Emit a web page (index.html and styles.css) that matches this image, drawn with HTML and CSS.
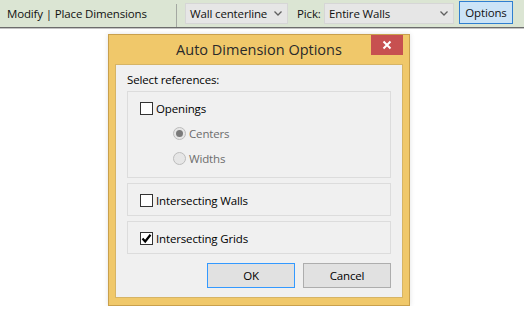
FILE: index.html
```html
<!DOCTYPE html>
<html lang="en">
<head>
  <meta charset="UTF-8" />
  <title>Auto Dimension Options</title>
  <link rel="stylesheet" href="styles.css">
</head>
<body>
  <div class="ribbon">
    <span class="ribbon-title">Modify | Place Dimensions</span>
    <span class="sep"></span>
    <div class="combo combo-loc">
      <span>Wall centerline</span>
      <svg class="chev" width="8" height="5" viewBox="0 0 8 5"><path d="M0.5 0.5 L4 4 L7.5 0.5" fill="none" stroke="#606060" stroke-width="1.3"/></svg>
    </div>
    <span class="pick-label">Pick:</span>
    <div class="combo combo-pick">
      <span>Entire Walls</span>
      <svg class="chev" width="8" height="5" viewBox="0 0 8 5"><path d="M0.5 0.5 L4 4 L7.5 0.5" fill="none" stroke="#606060" stroke-width="1.3"/></svg>
    </div>
    <button class="opts">Options</button>
  </div>

  <div class="dialog">
    <div class="titlebar">
      <span></span>
      <span class="title">Auto Dimension Options</span>
      <button class="close">
        <svg width="10" height="10" viewBox="0 0 10 10"><path d="M1.5 1.5 L8.5 8.5 M8.5 1.5 L1.5 8.5" stroke="#fff" stroke-width="2"/></svg>
      </button>
    </div>

    <div class="panel">
      <div class="caption">Select references:</div>

      <div class="group group-openings">
        <div class="row">
          <span class="check"></span>
          <span>Openings</span>
        </div>
        <div class="row sub disabled">
          <span class="radio on"></span>
          <span>Centers</span>
        </div>
        <div class="row sub disabled">
          <span class="radio"></span>
          <span>Widths</span>
        </div>
      </div>

      <div class="group">
        <div class="row">
          <span class="check"></span>
          <span>Intersecting Walls</span>
        </div>
      </div>

      <div class="group">
        <div class="row">
          <span class="check">
            <svg width="11" height="11" viewBox="0 0 11 11"><path d="M1.5 5.5 L4.2 8.5 L9.5 1.8" fill="none" stroke="#000" stroke-width="2.2"/></svg>
          </span>
          <span>Intersecting Grids</span>
        </div>
      </div>

      <div class="buttons">
        <button class="btn btn-default">OK</button>
        <button class="btn">Cancel</button>
      </div>
    </div>
  </div>
</body>
</html>
```

FILE: styles.css
```css
body {
  margin: 0;
  font-family: "Open Sans", "Noto Sans", sans-serif;
  font-size: 11.5px;
  letter-spacing: -0.15px;
  color: #000;
  background: #fff;
}
button {
  font-family: inherit;
  font-size: inherit;
  letter-spacing: inherit;
  color: inherit;
  padding: 0;
  margin: 0;
}
.ribbon {
  display: flex;
  align-items: center;
  height: 27px;
  background: #dbe5d3;
  border-bottom: 1px solid #6c6c6c;
  box-shadow: 0 1px 0 #c4c4c4;
  color: #111;
}
.ribbon-title {
  width: 176px;
  padding-left: 7px;
  box-sizing: border-box;
  white-space: nowrap;
}
.sep {
  width: 1px;
  align-self: stretch;
  margin-top: 4px;
  background: #a4a8a2;
}
.combo {
  display: flex;
  align-items: center;
  justify-content: space-between;
  height: 21px;
  box-sizing: border-box;
  padding: 0 5px 0 4px;
  background: #e6e6e6;
  border: 1px solid #d6d6d6;
  white-space: nowrap;
}
.combo-loc {
  width: 103px;
  margin-left: 8px;
}
.combo-pick {
  width: 130px;
}
.pick-label {
  width: 27px;
  margin-left: 9px;
}
.chev {
  flex: none;
}
.opts {
  width: 54px;
  height: 23px;
  margin-left: 5px;
  margin-bottom: 2px;
  background: #cce4f7;
  border: 1px solid #2f7fd0;
}

.dialog {
  width: 302px;
  margin: 6px 0 0 108px;
  box-sizing: border-box;
  background: #f0c86a;
  border: 1px solid #c9a04c;
  padding: 0 6px 7px;
  box-shadow: 0 0 5px rgba(0, 0, 0, 0.12);
}
.titlebar {
  display: grid;
  grid-template-columns: 1fr auto 1fr;
  align-items: center;
  height: 29px;
}
.title {
  font-size: 14.5px;
  letter-spacing: 0;
  color: #2a2a2a;
  white-space: nowrap;
}
.close {
  justify-self: end;
  align-self: start;
  width: 32px;
  height: 20px;
  display: flex;
  align-items: center;
  justify-content: center;
  background: #c75050;
  border: none;
}
.panel {
  background: #f0f0f0;
  border: 1px solid #d6b465;
  padding: 7px 11px 9px;
}
.caption {
  height: 16px;
  line-height: 16px;
  margin-bottom: 3px;
}
.group {
  border: 1px solid #dcdcdc;
  padding: 8px 12px 7px;
  margin-bottom: 5px;
  display: flex;
  flex-direction: column;
  gap: 9px;
}
.group-openings {
  padding-bottom: 11px;
}
.row {
  display: flex;
  align-items: center;
  height: 16px;
  gap: 3px;
  white-space: nowrap;
}
.row.sub {
  margin-left: 33px;
}
.disabled {
  color: #6d6d6d;
}
.check {
  width: 13px;
  height: 13px;
  box-sizing: border-box;
  border: 1px solid #333;
  background: #fff;
  display: flex;
  align-items: center;
  justify-content: center;
}
.radio {
  width: 13px;
  height: 13px;
  box-sizing: border-box;
  border: 1px solid #bcbcbc;
  border-radius: 50%;
  background: #e6e6e6;
  display: flex;
  align-items: center;
  justify-content: center;
}
.radio.on::after {
  content: "";
  width: 7px;
  height: 7px;
  border-radius: 50%;
  background: #7a7a7a;
}
.buttons {
  display: flex;
  justify-content: flex-end;
  gap: 8px;
  margin-top: 9px;
}
.btn {
  width: 88px;
  height: 25px;
  background: #e1e1e1;
  border: 1px solid #adadad;
}
.btn-default {
  border-color: #3399ff;
}
```
